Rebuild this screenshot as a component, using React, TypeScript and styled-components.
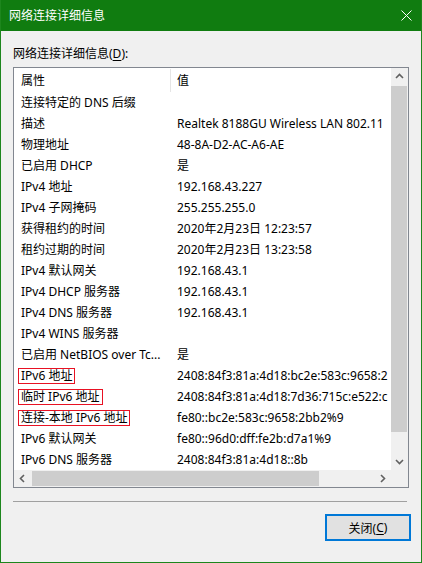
import styled, { createGlobalStyle } from "styled-components";

const GlobalStyle = createGlobalStyle`
	html, body {
		margin: 0;
		padding: 0;
		background: #f0f0f0;
	}
	* {
		box-sizing: border-box;
	}
`

const FONT = `"Microsoft YaHei", "Noto Sans", "Noto Sans CJK SC", sans-serif`

const Window = styled.div`
	width: 422px;
	height: 563px;
	display: flex;
	flex-direction: column;
	background: #f0f0f0;
	border: 1px solid #1d861d;
	border-top: none;
	font-family: ${FONT};
	font-size: 12px;
	color: #000;
	overflow: hidden;
`

const TitleBar = styled.div`
	height: 31px;
	margin: 0 -1px;
	background: #107c10;
	display: flex;
	align-items: center;
	justify-content: space-between;
	padding: 0 10px 0 9px;
	color: #fff;
`

const Title = styled.div`
	font-size: 12px;
	line-height: 16px;
`

const Body = styled.div`
	flex: 1;
	display: flex;
	flex-direction: column;
	padding: 15px 12px 0 12px;
`

const Label = styled.div`
	line-height: 16px;
	margin-bottom: 5px;
	white-space: nowrap;
`

const Underline = styled.span`
	text-decoration: underline;
	text-underline-offset: 2px;
`

const ListBox = styled.div`
	height: 421px;
	border: 1px solid #828790;
	background: #fff;
	display: grid;
	grid-template-columns: 1fr 17px;
	grid-template-rows: 1fr 17px;
`

const Viewport = styled.div`
	overflow: hidden;
	background: #fff;
	padding-top: 1px;
`

const Row = styled.div<{ $header?: boolean }>`
	display: flex;
	height: ${(p) => (p.$header ? "23px" : "21px")};
	align-items: center;
	white-space: nowrap;
	line-height: 16px;
`

const NameCell = styled.div<{ $header?: boolean }>`
	width: 157px;
	flex: none;
	height: 100%;
	display: flex;
	align-items: center;
	padding-left: 7px;
	overflow: hidden;
	border-right: ${(p) => (p.$header ? "1px solid #e5e5e5" : "1px solid transparent")};
`

const ValueCell = styled.div`
	padding-left: 6px;
	flex: none;
`

const Marked = styled.span`
	display: inline-block;
	border: 1px solid #e81123;
	line-height: 14px;
	padding: 0 2px 0 2px;
	margin-left: -3px;
`

const VScroll = styled.div`
	background: #f0f0f0;
	display: flex;
	flex-direction: column;
`

const HScroll = styled.div`
	background: #f0f0f0;
	display: flex;
`

const ArrowBox = styled.div`
	width: 17px;
	height: 17px;
	flex: none;
	display: flex;
	align-items: center;
	justify-content: center;
`

const VTrack = styled.div`
	flex: 1;
	display: flex;
	flex-direction: column;
	padding: 1px 1px 0 0;
`

const VThumb = styled.div`
	height: 346px;
	background: #cdcdcd;
`

const HTrack = styled.div`
	flex: 1;
	display: flex;
	padding: 1px 0 1px 1px;
`

const HThumb = styled.div`
	width: 287px;
	background: #cdcdcd;
`

const Corner = styled.div`
	background: #f0f0f0;
`

const Separator = styled.div`
	height: 1px;
	background: #a0a0a0;
	margin: 13px 2px 0 0;
`

const Footer = styled.div`
	display: flex;
	justify-content: flex-end;
	margin: 12px -2px 0 0;
`

const Button = styled.button`
	width: 86px;
	height: 27px;
	border: 2px solid #0078d7;
	background: #e1e1e1;
	font-family: ${FONT};
	font-size: 12px;
	color: #000;
	padding: 0;
	display: flex;
	align-items: center;
	justify-content: center;
`

type Item = { name: string; value: string; marked?: boolean }

const items: Item[] = [
	{ name: "连接特定的 DNS 后缀", value: "" },
	{ name: "描述", value: "Realtek 8188GU Wireless LAN 802.11" },
	{ name: "物理地址", value: "48-8A-D2-AC-A6-AE" },
	{ name: "已启用 DHCP", value: "是" },
	{ name: "IPv4 地址", value: "192.168.43.227" },
	{ name: "IPv4 子网掩码", value: "255.255.255.0" },
	{ name: "获得租约的时间", value: "2020年2月23日 12:23:57" },
	{ name: "租约过期的时间", value: "2020年2月23日 13:23:58" },
	{ name: "IPv4 默认网关", value: "192.168.43.1" },
	{ name: "IPv4 DHCP 服务器", value: "192.168.43.1" },
	{ name: "IPv4 DNS 服务器", value: "192.168.43.1" },
	{ name: "IPv4 WINS 服务器", value: "" },
	{ name: "已启用 NetBIOS over Tc...", value: "是" },
	{ name: "IPv6 地址", value: "2408:84f3:81a:4d18:bc2e:583c:9658:2", marked: true },
	{ name: "临时 IPv6 地址", value: "2408:84f3:81a:4d18:7d36:715c:e522:c", marked: true },
	{ name: "连接-本地 IPv6 地址", value: "fe80::bc2e:583c:9658:2bb2%9", marked: true },
	{ name: "IPv6 默认网关", value: "fe80::96d0:dff:fe2b:d7a1%9" },
	{ name: "IPv6 DNS 服务器", value: "2408:84f3:81a:4d18::8b" },
]

const Chevron = ({ dir }: { dir: "up" | "down" | "left" | "right" }) => {
	const rot = { up: 0, right: 90, down: 180, left: 270 }[dir]
	return (
		<svg width="9" height="9" viewBox="0 0 9 9">
			<polyline
				points="1,6 4.5,2.5 8,6"
				fill="none"
				stroke="#606060"
				strokeWidth="1.6"
				transform={`rotate(${rot} 4.5 4.5)`}
			/>
		</svg>
	)
}

export default function App() {
	return (
		<>
			<GlobalStyle />
			<Window>
				<TitleBar>
					<Title>网络连接详细信息</Title>
					<svg width="11" height="11" viewBox="0 0 11 11">
						<path d="M0.5 0.5 L10.5 10.5 M10.5 0.5 L0.5 10.5" stroke="#fff" strokeWidth="1" />
					</svg>
				</TitleBar>
				<Body>
					<Label>网络连接详细信息(<Underline>D</Underline>):</Label>
					<ListBox>
						<Viewport>
							<Row $header>
								<NameCell $header>属性</NameCell>
								<ValueCell>值</ValueCell>
							</Row>
							{items.map((it) => (
								<Row key={it.name}>
									<NameCell>{it.marked ? <Marked>{it.name}</Marked> : it.name}</NameCell>
									<ValueCell>{it.value}</ValueCell>
								</Row>
							))}
						</Viewport>
						<VScroll>
							<ArrowBox><Chevron dir="up" /></ArrowBox>
							<VTrack><VThumb /></VTrack>
							<ArrowBox><Chevron dir="down" /></ArrowBox>
						</VScroll>
						<HScroll>
							<ArrowBox><Chevron dir="left" /></ArrowBox>
							<HTrack><HThumb /></HTrack>
							<ArrowBox><Chevron dir="right" /></ArrowBox>
						</HScroll>
						<Corner />
					</ListBox>
					<Separator />
					<Footer>
						<Button>关闭(<Underline>C</Underline>)</Button>
					</Footer>
				</Body>
			</Window>
		</>
	)
}
